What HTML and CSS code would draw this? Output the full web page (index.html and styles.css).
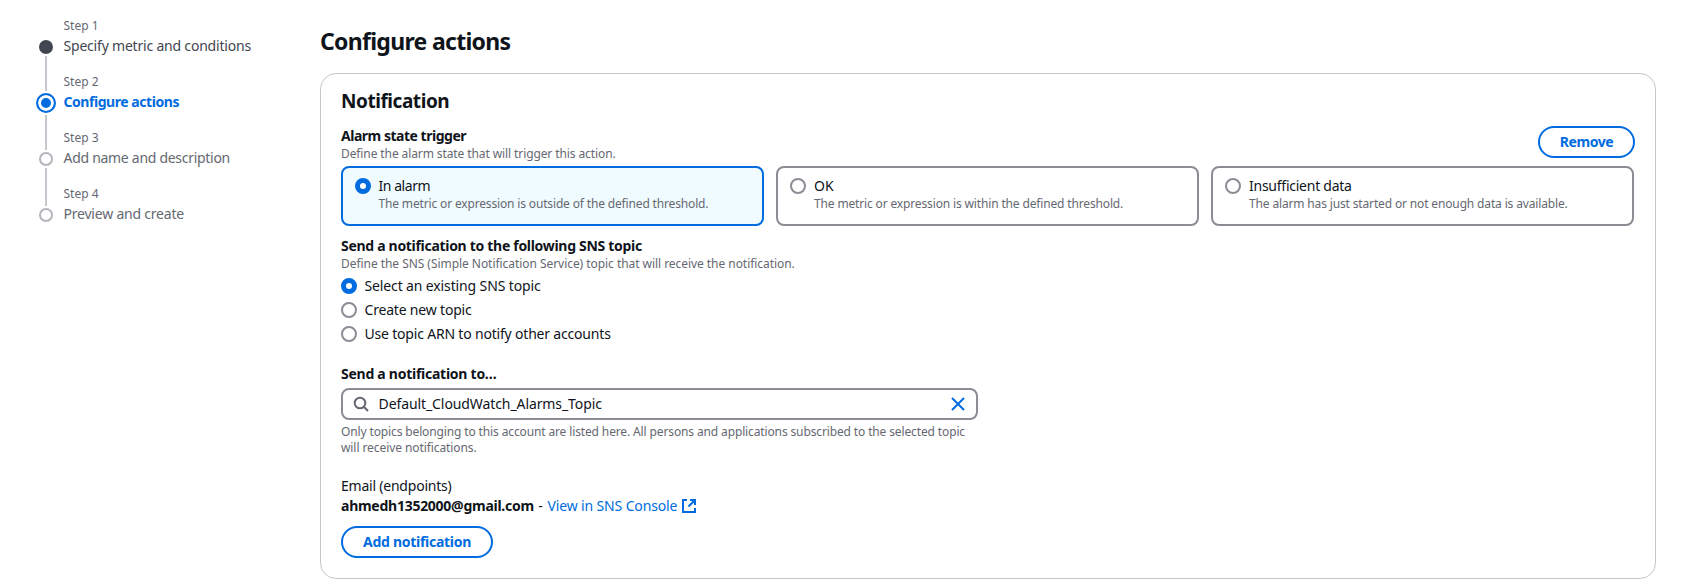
FILE: index.html
```html
<!DOCTYPE html>
<html lang="en">
<head>
<meta charset="utf-8">
<title>Configure actions</title>
<link rel="stylesheet" href="styles.css">
</head>
<body>
<div class="layout">
  <nav class="steps">
    <div class="step step-done">
      <div class="rail"><span class="dot"></span><span class="line"></span></div>
      <div class="step-text"><div class="step-no">Step 1</div><div class="step-name"><span class="t-s1">Specify metric and conditions</span></div></div>
    </div>
    <div class="step step-active">
      <div class="rail"><span class="dot"></span><span class="line"></span></div>
      <div class="step-text"><div class="step-no">Step 2</div><div class="step-name"><span class="t-s2">Configure actions</span></div></div>
    </div>
    <div class="step">
      <div class="rail"><span class="dot"></span><span class="line"></span></div>
      <div class="step-text"><div class="step-no">Step 3</div><div class="step-name"><span class="t-s3">Add name and description</span></div></div>
    </div>
    <div class="step">
      <div class="rail"><span class="dot"></span></div>
      <div class="step-text"><div class="step-no">Step 4</div><div class="step-name"><span class="t-s4">Preview and create</span></div></div>
    </div>
  </nav>
  <main class="content">
    <h1><span class="t-h1">Configure actions</span></h1>
    <section class="card">
      <h2><span class="t-h2">Notification</span></h2>
      <div class="trigger-head">
        <div class="trigger-label">
          <div class="label"><span class="t-l1">Alarm state trigger</span></div>
          <div class="hint"><span class="t-d1">Define the alarm state that will trigger this action.</span></div>
        </div>
        <button class="btn"><span class="t-b1">Remove</span></button>
      </div>
      <div class="tiles">
        <label class="tile tile-on"><span class="radio radio-on"></span><span class="tile-text"><span class="opt"><span class="t-o1">In alarm</span></span><span class="hint"><span class="t-d2">The metric or expression is outside of the defined threshold.</span></span></span></label>
        <label class="tile"><span class="radio"></span><span class="tile-text"><span class="opt"><span class="t-o2">OK</span></span><span class="hint"><span class="t-d3">The metric or expression is within the defined threshold.</span></span></span></label>
        <label class="tile"><span class="radio"></span><span class="tile-text"><span class="opt"><span class="t-o3">Insufficient data</span></span><span class="hint"><span class="t-d4">The alarm has just started or not enough data is available.</span></span></span></label>
      </div>
      <div class="field topic-kind">
        <div class="label"><span class="t-l2">Send a notification to the following SNS topic</span></div>
        <div class="hint"><span class="t-d5">Define the SNS (Simple Notification Service) topic that will receive the notification.</span></div>
        <div class="radios">
          <label class="choice"><span class="radio radio-on"></span><span class="t-o4">Select an existing SNS topic</span></label>
          <label class="choice"><span class="radio"></span><span class="t-o5">Create new topic</span></label>
          <label class="choice"><span class="radio"></span><span class="t-o6">Use topic ARN to notify other accounts</span></label>
        </div>
      </div>
      <div class="field topic-name">
        <div class="label"><span class="t-l3">Send a notification to…</span></div>
        <div class="input">
          <svg class="icon-search" viewBox="0 0 16 16"><circle cx="7" cy="7" r="5.300"/><path d="M10.800 10.800 15 15"/></svg>
          <span class="value"><span class="t-o7">Default_CloudWatch_Alarms_Topic</span></span>
          <svg class="icon-close" viewBox="0 0 16 16"><path d="m2 2 12 12M14 2 2 14"/></svg>
        </div>
        <div class="hint help"><span class="t-d6">Only topics belonging to this account are listed here. All persons and applications subscribed to the selected topic</span><br><span class="t-d7">will receive notifications.</span></div>
      </div>
      <div class="endpoints">
        <div><span class="t-o8">Email (endpoints)</span></div>
        <div class="endpoint"><b class="t-em">ahmedh1352000@gmail.com</b><span class="dash">-</span><a class="link"><span class="t-ln">View in SNS Console</span><svg class="icon-ext" viewBox="0 0 14 14"><path d="M5 1H1v12h12V9M8 1h5v5M13 1 6.500 7.500"/></svg></a></div>
      </div>
      <button class="btn btn-add"><span class="t-b2">Add notification</span></button>
    </section>
  </main>
</div>
</body>
</html>
```
FILE: styles.css
```css
* { box-sizing: border-box; }
body { margin: 0; background: #fff; color: #0f141a; font: 14px/20px "Noto Sans", "Open Sans", sans-serif; }
.layout { display: flex; width: 1688px; height: 588px; overflow: hidden; white-space: nowrap; }

.steps { width: 320px; padding: 18px 0 0 36px; }
.step { display: flex; gap: 7.5px; height: 56px; }
.rail { display: flex; flex-direction: column; align-items: center; width: 20px; height: 56px; padding-top: 22px; }
.dot { flex: none; width: 14px; height: 14px; border: 2px solid #b4b4bb; border-radius: 50%; }
.line { flex: none; width: 2px; height: 38px; margin-top: 2px; background: #c6c6cd; }
.step-done .dot { background: #424650; border-color: #424650; }
.step-done .line { height: 35px; }
.step-active .rail { padding-top: 19px; }
.step-active .dot { width: 20px; height: 20px; background: #006ce0; border-color: #006ce0; box-shadow: inset 0 0 0 3px #fff; }
.step-active .line { height: 35px; }
.step-no { font-size: 12px; line-height: 16px; color: #656871; }
.step-name { margin-top: 2px; color: #656871; line-height: 20px; }
.step-done .step-name { color: #424650; }
.step-active .step-name { color: #006ce0; font-weight: 700; }

.content { width: 1336px; }
h1 { margin: 0; padding-top: 26px; height: 73px; font-size: 23px; line-height: 30px; font-weight: 700; }
.card { height: 506px; padding: 15px 20px 0; border: 1px solid #c6c6cd; border-radius: 16px; }
h2 { margin: 0; height: 37px; font-size: 19px; line-height: 24px; font-weight: 700; }
.trigger-head { display: flex; justify-content: space-between; height: 40px; }
.label { font-weight: 700; line-height: 20px; }
.hint { display: block; font-size: 12px; line-height: 16px; color: #656871; }
.btn { height: 32px; padding: 0; border: 2px solid #006ce0; border-radius: 20px; background: #fff; color: #006ce0; font: 700 14px/20px "Noto Sans", "Open Sans", sans-serif; }
.trigger-head .btn { width: 97px; }
.tiles { display: grid; grid-template-columns: 423px 423px 423px; column-gap: 12px; }
.tile { display: flex; gap: 8px; height: 60px; padding: 8px 12px; border: 2px solid #8c8c94; border-radius: 8px; }
.tile-on { gap: 7.5px; border-color: #006ce0; background: #f0fbff; }
.radio { flex: none; width: 16px; height: 16px; margin-top: 2px; border: 2px solid #8c8c94; border-radius: 50%; background: #fff; }
.radio-on { border: 5px solid #006ce0; }
.opt { display: block; }
.topic-kind { margin-top: 10px; }
.radios { display: grid; row-gap: 4px; margin-top: 4px; }
.choice { display: flex; gap: 7.5px; height: 20px; }
.topic-name { margin-top: 20px; }
.input { display: flex; align-items: center; width: 637px; height: 32px; margin-top: 4px; padding: 0 10px; border: 2px solid #8c8c94; border-radius: 8px; }
.icon-search, .icon-close { flex: none; width: 16px; height: 16px; fill: none; stroke-width: 2; stroke: #656871; }
.icon-close { stroke: #006ce0; }
.value { flex: 1; margin-left: 9.5px; }
.help { margin-top: 4px; }
.endpoints { margin-top: 20px; }
.endpoint { display: flex; align-items: center; }
.dash { margin: 0 4.800px 0 4.300px; }
.link { display: flex; align-items: center; gap: 5px; color: #006ce0; }
.icon-ext { width: 14px; height: 14px; fill: none; stroke: #006ce0; stroke-width: 2; }
.btn-add { width: 152px; margin-top: 10px; }

/* Per-string tracking */
.t-s1 { letter-spacing: -.2px; }
.t-s2 { letter-spacing: -.45px; }
.t-s3 { letter-spacing: -.29px; }
.t-s4 { letter-spacing: -.21px; }
.t-h1 { letter-spacing: -.7px; }
.t-h2 { letter-spacing: -.45px; }
.t-l1 { letter-spacing: -.48px; }
.t-l2 { letter-spacing: -.3px; }
.t-l3 { letter-spacing: -.26px; }
.t-d1 { letter-spacing: -.1px; }
.t-d2 { letter-spacing: -.155px; }
.t-d3, .t-d4 { letter-spacing: -.148px; }
.t-d5 { letter-spacing: -.05px; }
.t-d6 { letter-spacing: -.13px; }
.t-d7 { letter-spacing: -.08px; }
.t-o1 { letter-spacing: -.45px; }
.t-o3 { letter-spacing: -.25px; }
.t-o4 { letter-spacing: -.13px; }
.t-o5, .t-o6 { letter-spacing: -.19px; }
.t-o7 { letter-spacing: -.09px; }
.t-o8 { letter-spacing: -.22px; }
.t-em { letter-spacing: -.26px; }
.t-ln { letter-spacing: -.14px; }
.t-b1 { letter-spacing: -.45px; }
.t-b2 { letter-spacing: -.28px; }
```
